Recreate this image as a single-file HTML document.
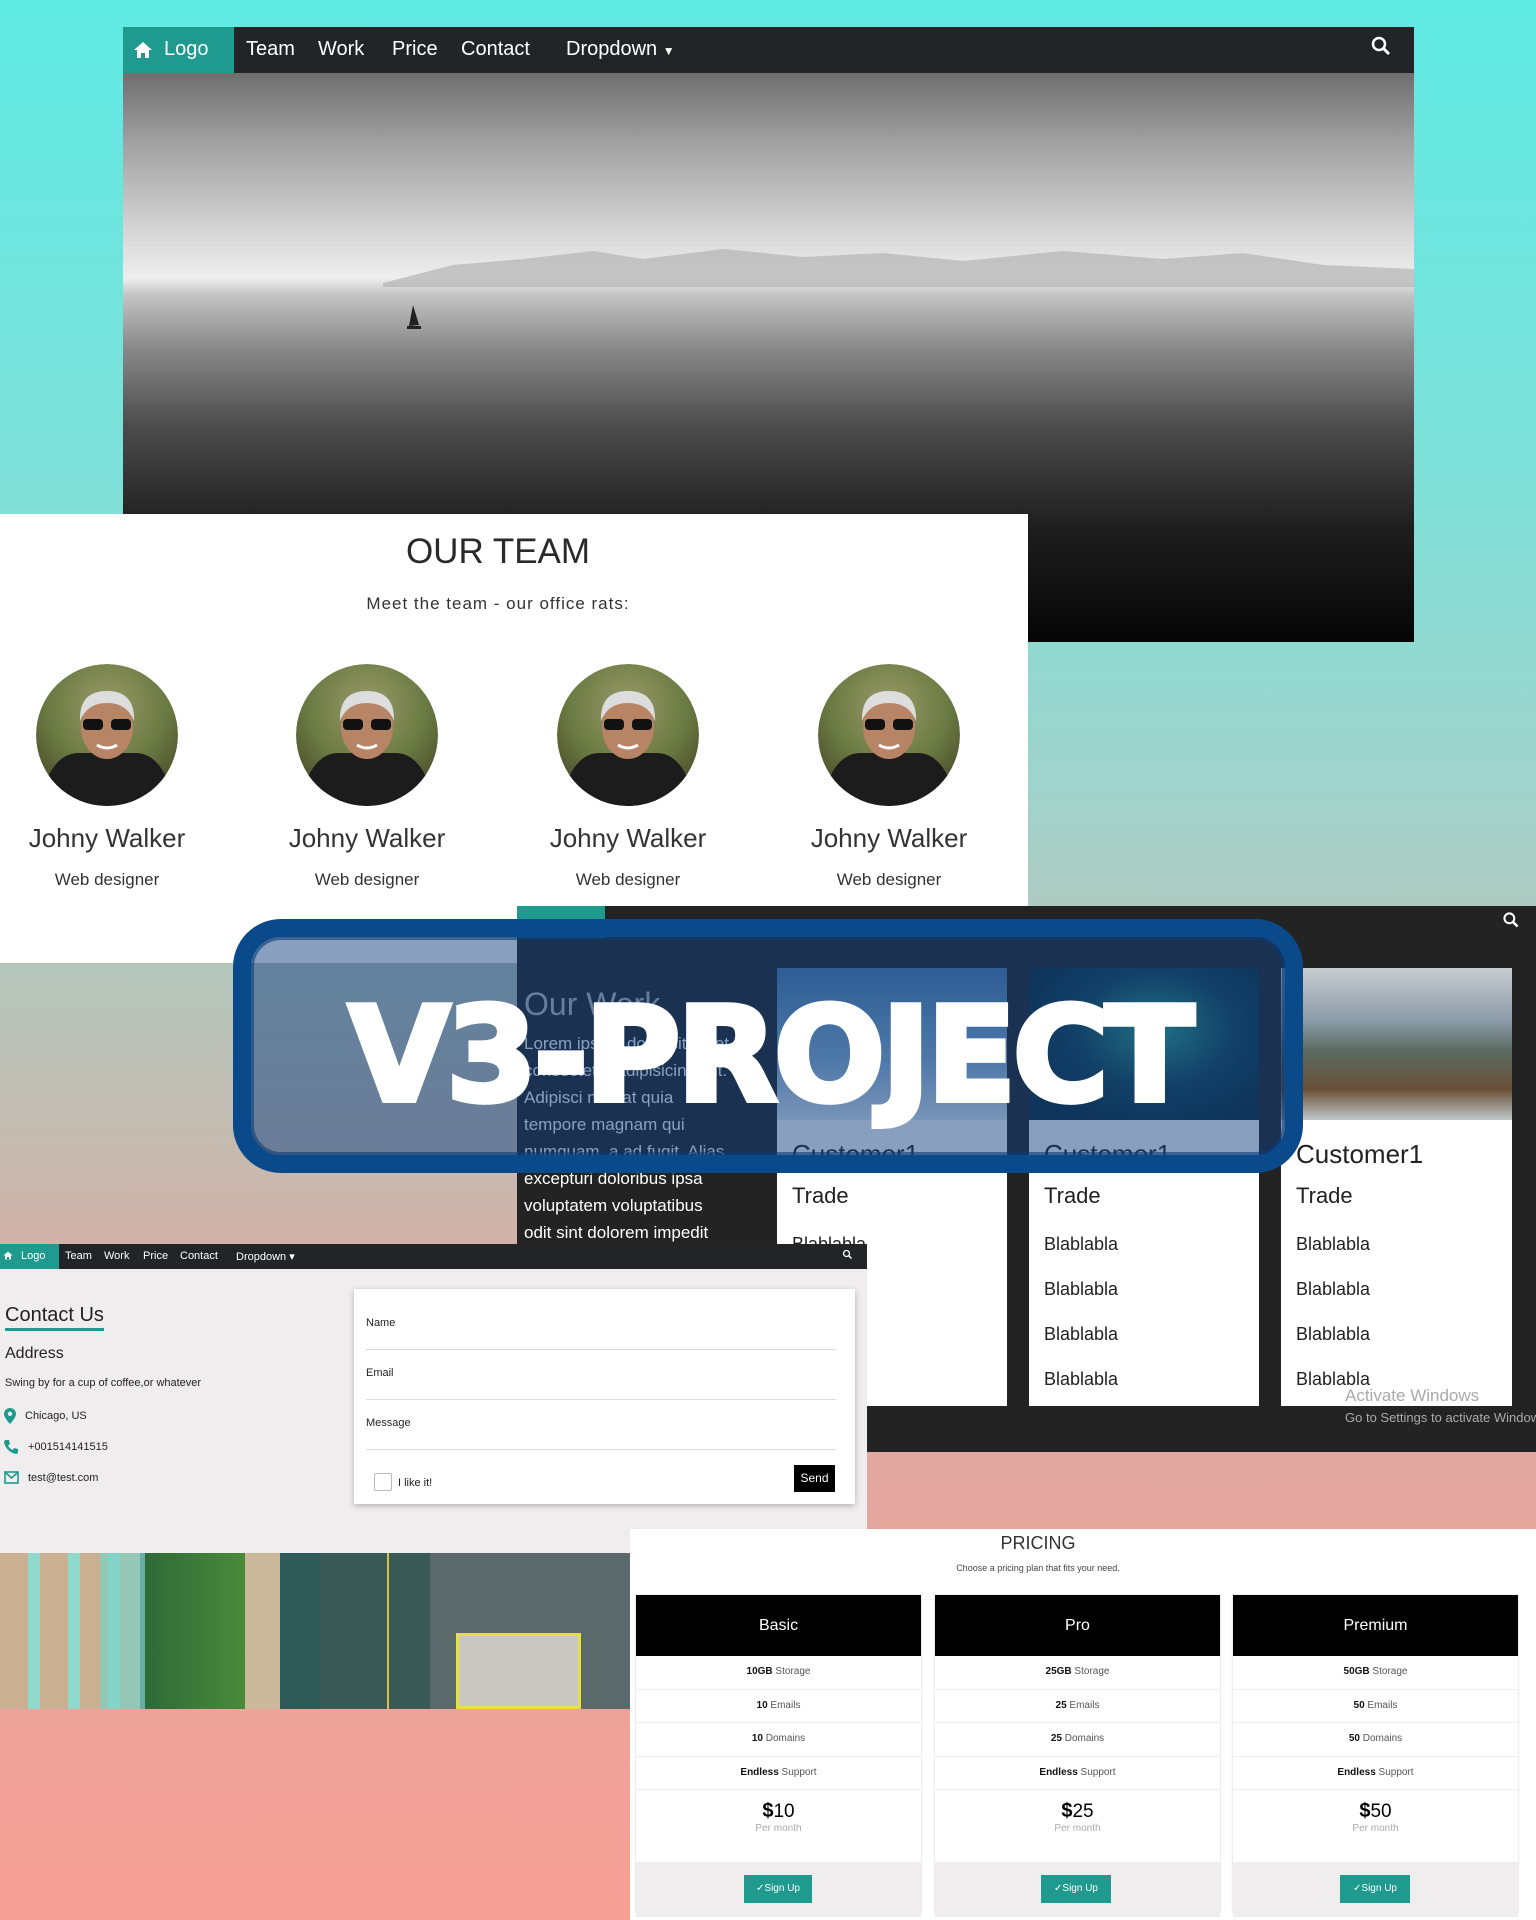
<!DOCTYPE html>
<html><head><meta charset="utf-8">
<style>
*{margin:0;padding:0;box-sizing:border-box}
body{width:1536px;height:1920px;position:relative;overflow:hidden;font-family:"Liberation Sans",sans-serif;
background:linear-gradient(180deg,#5eeae3 0%,#7ee0d8 25%,#a2d2ca 42%,#b4c6bc 50%,#c6baaf 60%,#d8aca5 68%,#e6a69e 80%,#f7a096 100%);}
.abs{position:absolute}
.nav{background:#222428;color:#fff}
.nav span{position:absolute;white-space:nowrap}
.teal{background:#1f9a8e}
.center{text-align:center}
</style></head><body>

<!-- HERO -->
<div class="abs" style="left:123px;top:27px;width:1291px;height:615px;overflow:hidden">
  <div class="abs nav" style="left:0;top:0;width:1291px;height:46px;font-size:20px">
    <div class="abs teal" style="left:0;top:0;width:111px;height:46px"></div>
    <svg class="abs" style="left:10px;top:14px" width="20" height="18" viewBox="0 0 20 18"><path d="M10 1L1 9h3v8h4v-5h4v5h4V9h3z" fill="#fff"/></svg>
    <span style="left:41px;top:11px">Logo</span>
    <span style="left:123px;top:11px">Team</span>
    <span style="left:195px;top:11px">Work</span>
    <span style="left:269px;top:11px">Price</span>
    <span style="left:338px;top:11px">Contact</span>
    <span style="left:443px;top:11px">Dropdown <span style="position:static;font-size:12px">▼</span></span>
    <svg class="abs" style="left:1247px;top:8px" width="22" height="22" viewBox="0 0 22 22"><circle cx="9" cy="9" r="6" stroke="#fff" stroke-width="2.5" fill="none"/><path d="M13.5 13.5L19 19" stroke="#fff" stroke-width="3"/></svg>
  </div>
  <div class="abs" style="left:0;top:46px;width:1291px;height:569px;background:linear-gradient(180deg,#6e6e6e 0%,#a0a0a0 12%,#d6d6d6 28%,#eeeeee 36%,#c4c4c4 39%,#8a8a8a 48%,#4c4c4c 62%,#1e1e1e 80%,#050505 100%)">
    <svg class="abs" style="left:0;top:0" width="1291" height="569"><path d="M260 210 L330 192 L400 186 L470 178 L520 186 L600 176 L680 184 L760 180 L840 188 L940 178 L1040 186 L1120 180 L1200 192 L1291 196 L1291 214 L260 214Z" fill="#b4b4b4" opacity=".7"/><path d="M286 253 L290 232 L296 252Z" fill="#222"/><rect x="284" y="253" width="14" height="3" fill="#222"/></svg>
  </div>
</div>

<!-- TEAM -->
<div class="abs" style="left:0;top:514px;width:1028px;height:449px;background:#fff;color:#333">
  <div class="abs center" style="left:0;width:996px;top:18px;font-size:35px;color:#2a2a2a">OUR TEAM</div>
  <div class="abs center" style="left:0;width:996px;top:80px;font-size:17px;letter-spacing:1px">Meet the team - our office rats:</div>
</div>
<svg class="abs" style="left:0;top:660px" width="1028" height="160">
  <defs>
    <radialGradient id="av" cx="50%" cy="30%" r="70%"><stop offset="0" stop-color="#9a9a6a"/><stop offset=".6" stop-color="#6a7a42"/><stop offset="1" stop-color="#4a4a2a"/></radialGradient>
    <clipPath id="cc"><circle cx="0" cy="0" r="71"/></clipPath>
    <g id="face" clip-path="url(#cc)">
      <circle r="71" fill="url(#av)"/>
      <path d="M-70 80 Q-60 20 -30 18 L30 18 Q60 20 70 80Z" fill="#1c1c1c"/>
      <ellipse cx="0" cy="-8" rx="26" ry="32" fill="#b88466"/>
      <path d="M-27 -14 Q-28 -44 0 -44 Q28 -44 27 -14 Q20 -32 0 -32 Q-20 -32 -27 -14Z" fill="#ddd"/>
      <rect x="-24" y="-16" width="20" height="11" rx="4" fill="#111"/><rect x="4" y="-16" width="20" height="11" rx="4" fill="#111"/>
      <path d="M-10 10 Q0 16 10 10" stroke="#fff" stroke-width="3" fill="none"/>
    </g>
  </defs>
  <use href="#face" x="107" y="75"/><use href="#face" x="367" y="75"/><use href="#face" x="628" y="75"/><use href="#face" x="889" y="75"/>
</svg>
<div class="abs center" style="left:7px;width:200px;top:823px;font-size:26px;color:#333">Johny Walker</div>
<div class="abs center" style="left:267px;width:200px;top:823px;font-size:26px;color:#333">Johny Walker</div>
<div class="abs center" style="left:528px;width:200px;top:823px;font-size:26px;color:#333">Johny Walker</div>
<div class="abs center" style="left:789px;width:200px;top:823px;font-size:26px;color:#333">Johny Walker</div>
<div class="abs center" style="left:7px;width:200px;top:870px;font-size:17px;color:#333">Web designer</div>
<div class="abs center" style="left:267px;width:200px;top:870px;font-size:17px;color:#333">Web designer</div>
<div class="abs center" style="left:528px;width:200px;top:870px;font-size:17px;color:#333">Web designer</div>
<div class="abs center" style="left:789px;width:200px;top:870px;font-size:17px;color:#333">Web designer</div>

<!-- WORK -->
<div class="abs" style="left:517px;top:906px;width:1019px;height:546px;background:#232323;overflow:hidden">
  <div class="abs teal" style="left:0;top:0;width:88px;height:32px"></div>
  <svg class="abs" style="left:985px;top:5px" width="18" height="18" viewBox="0 0 22 22"><circle cx="9" cy="9" r="6" stroke="#fff" stroke-width="2.5" fill="none"/><path d="M13.5 13.5L19 19" stroke="#fff" stroke-width="3"/></svg>
  <div class="abs" style="left:7px;top:80px;font-size:32px;color:#bbb">Our Work</div>
  <div class="abs" style="left:7px;top:124px;font-size:17px;line-height:27px;color:#fff">Lorem ipsum dolor sit amet,<br>consectetur adipisicing elit.<br>Adipisci nihil at quia<br>tempore magnam qui<br>numquam, a ad fugit. Alias<br>excepturi doloribus ipsa<br>voluptatem voluptatibus<br>odit sint dolorem impedit</div>
  <div class="abs" style="left:260px;top:62px;width:230px;height:438px;background:#fff">
    <div style="height:152px;background:linear-gradient(180deg,#4a7aa8,#8ab0d0 60%,#dfe8f0)"></div>
  </div>
  <div class="abs" style="left:512px;top:62px;width:230px;height:438px;background:#fff">
    <div style="height:152px;background:radial-gradient(ellipse at 55% 40%,#2fa08a,#12404e 45%,#0c2a38 80%),#123"></div>
  </div>
  <div class="abs" style="left:764px;top:62px;width:231px;height:438px;background:#fff">
    <div style="height:152px;background:linear-gradient(180deg,#c8ccd0 0%,#8a9aa8 35%,#5a6a60 55%,#6a5038 80%,#c0c8c8 100%)"></div>
  </div>
  <div class="abs" style="left:275px;top:228px;font-size:26px;color:#222;line-height:40px">Customer1<br><span style="font-size:22px">Trade</span></div>
  <div class="abs" style="left:527px;top:228px;font-size:26px;color:#222;line-height:40px">Customer1<br><span style="font-size:22px">Trade</span></div>
  <div class="abs" style="left:779px;top:228px;font-size:26px;color:#222;line-height:40px">Customer1<br><span style="font-size:22px">Trade</span></div>
  <div class="abs" style="left:275px;top:316px;font-size:18px;color:#222;line-height:45px">Blablabla<br>Blablabla<br>Blablabla<br>Blablabla</div>
  <div class="abs" style="left:527px;top:316px;font-size:18px;color:#222;line-height:45px">Blablabla<br>Blablabla<br>Blablabla<br>Blablabla</div>
  <div class="abs" style="left:779px;top:316px;font-size:18px;color:#222;line-height:45px">Blablabla<br>Blablabla<br>Blablabla<br>Blablabla</div>
  <div class="abs" style="left:828px;top:480px;font-size:17px;color:#aaa">Activate Windows</div>
  <div class="abs" style="left:828px;top:504px;font-size:13px;color:#aaa;white-space:nowrap">Go to Settings to activate Windows.</div>
</div>

<!-- CONTACT -->
<div class="abs" style="left:0;top:1244px;width:867px;height:309px;background:#efeded;color:#222">
  <div class="abs nav" style="left:0;top:0;width:867px;height:25px;font-size:11px">
    <div class="abs teal" style="left:0;top:0;width:59px;height:25px"></div>
    <svg class="abs" style="left:3px;top:7px" width="10" height="9" viewBox="0 0 20 18"><path d="M10 1L1 9h3v8h4v-5h4v5h4V9h3z" fill="#fff"/></svg>
    <span style="left:21px;top:6px">Logo</span><span style="left:65px;top:6px">Team</span><span style="left:104px;top:6px">Work</span><span style="left:143px;top:6px">Price</span><span style="left:180px;top:6px">Contact</span><span style="left:236px;top:6px">Dropdown ▾</span>
    <svg class="abs" style="left:842px;top:5px" width="11" height="11" viewBox="0 0 22 22"><circle cx="9" cy="9" r="6" stroke="#fff" stroke-width="2.5" fill="none"/><path d="M13.5 13.5L19 19" stroke="#fff" stroke-width="3"/></svg>
  </div>
  <div class="abs" style="left:5px;top:60px;font-size:20px;border-bottom:3px solid #1f9a8e;padding-bottom:1px">Contact Us</div>
  <div class="abs" style="left:5px;top:101px;font-size:16px">Address</div>
  <div class="abs" style="left:5px;top:133px;font-size:11px">Swing by for a cup of coffee,or whatever</div>
  <svg class="abs" style="left:4px;top:164px" width="12" height="16" viewBox="0 0 12 16"><path d="M6 0C2.7 0 0 2.6 0 5.8 0 10 6 16 6 16s6-6 6-10.2C12 2.6 9.3 0 6 0z" fill="#1f9a8e"/><circle cx="6" cy="5.8" r="2.2" fill="#efeded"/></svg>
  <div class="abs" style="left:25px;top:166px;font-size:11px">Chicago, US</div>
  <svg class="abs" style="left:4px;top:195px" width="15" height="15" viewBox="0 0 15 15"><path d="M2 1l3 0 1 4-2 1.5c1 2 2.5 3.5 4.5 4.5L10 9l4 1v3c0 1-1 2-2 2C6 14 1 9 0 3c0-1 1-2 2-2z" fill="#1f9a8e"/></svg>
  <div class="abs" style="left:28px;top:197px;font-size:11px">+001514141515</div>
  <svg class="abs" style="left:4px;top:227px" width="15" height="13" viewBox="0 0 15 13"><rect x="1" y="1" width="13" height="11" stroke="#1f9a8e" stroke-width="1.6" fill="none"/><path d="M1 1l6.5 6 6.5-6" stroke="#1f9a8e" stroke-width="1.6" fill="none"/></svg>
  <div class="abs" style="left:28px;top:228px;font-size:11px">test@test.com</div>
  <div class="abs" style="left:354px;top:45px;width:501px;height:215px;background:#fff;box-shadow:0 2px 6px rgba(0,0,0,.25)">
    <div class="abs" style="left:12px;top:28px;font-size:11px">Name</div>
    <div class="abs" style="left:12px;top:60px;width:470px;height:1px;background:#ddd"></div>
    <div class="abs" style="left:12px;top:78px;font-size:11px">Email</div>
    <div class="abs" style="left:12px;top:110px;width:470px;height:1px;background:#ddd"></div>
    <div class="abs" style="left:12px;top:128px;font-size:11px">Message</div>
    <div class="abs" style="left:12px;top:160px;width:470px;height:1px;background:#ddd"></div>
    <div class="abs" style="left:20px;top:184px;width:18px;height:18px;border:1px solid #bbb;border-radius:2px"></div>
    <div class="abs" style="left:44px;top:188px;font-size:11px">I like it!</div>
    <div class="abs" style="left:440px;top:176px;width:41px;height:27px;background:#000;color:#fff;font-size:12px;text-align:center;line-height:27px">Send</div>
  </div>
</div>

<!-- CITY -->
<div class="abs" style="left:0;top:1553px;width:630px;height:156px;overflow:hidden;background:#2f5a52">
  <div class="abs" style="left:0;top:0;width:140px;height:156px;background:#c9b090"></div>
  <div class="abs" style="left:0;top:0;width:160px;height:156px;background:repeating-linear-gradient(90deg,transparent 0 28px,#8fd8cc 28px 40px)"></div>
  <div class="abs" style="left:100px;top:0;width:50px;height:156px;background:#7fd2c8;opacity:.7"></div>
  <div class="abs" style="left:145px;top:0;width:100px;height:156px;background:linear-gradient(90deg,#2f6a38,#4a8a3a)"></div>
  <div class="abs" style="left:245px;top:0;width:35px;height:156px;background:#cbb89a"></div>
  <div class="abs" style="left:280px;top:0;width:40px;height:156px;background:#2e5a58"></div>
  <div class="abs" style="left:320px;top:0;width:110px;height:156px;background:#3a5a58"></div>
  <div class="abs" style="left:387px;top:0;width:2px;height:156px;background:#d8c040"></div>
  <div class="abs" style="left:430px;top:0;width:200px;height:156px;background:#5a6a6a"></div>
  <div class="abs" style="left:456px;top:80px;width:125px;height:76px;border:3px solid #e8e040;background:#c8c8c0"></div>
</div>

<!-- PRICING -->
<div class="abs" style="left:630px;top:1529px;width:906px;height:391px;background:#fff;color:#222">
  <div class="abs center" style="left:0;width:816px;top:4px;font-size:18px;color:#333">PRICING</div>
  <div class="abs center" style="left:0;width:816px;top:34px;font-size:9px;color:#444">Choose a pricing plan that fits your need.</div>
</div>

<div class="abs" style="left:636px;top:1595px;width:285px;height:318px;background:#fff;box-shadow:0 0 2px #ccc">
  <div style="height:61px;background:#000;color:#fff;text-align:center;line-height:61px;font-size:16px">Basic</div>
  <div style="font-size:10px;text-align:center;line-height:32.5px;color:#555"><div style="border-bottom:1px solid #eee"><b style="color:#111">10GB</b> Storage</div><div style="border-bottom:1px solid #eee"><b style="color:#111">10</b> Emails</div><div style="border-bottom:1px solid #eee"><b style="color:#111">10</b> Domains</div><div style="border-bottom:1px solid #eee"><b style="color:#111">Endless</b> Support</div></div>
  <div style="text-align:center;padding-top:10px;height:72px"><span style="font-size:20px;font-weight:bold">$</span><span style="font-size:19px">10</span><div style="font-size:10px;color:#aaa">Per month</div></div>
  <div style="height:55px;background:#efeded;position:relative"><div class="abs teal" style="left:108px;top:13px;width:68px;height:28px;color:#fff;font-size:10px;text-align:center;line-height:28px">✓Sign Up</div></div>
</div>
<div class="abs" style="left:935px;top:1595px;width:285px;height:318px;background:#fff;box-shadow:0 0 2px #ccc">
  <div style="height:61px;background:#000;color:#fff;text-align:center;line-height:61px;font-size:16px">Pro</div>
  <div style="font-size:10px;text-align:center;line-height:32.5px;color:#555"><div style="border-bottom:1px solid #eee"><b style="color:#111">25GB</b> Storage</div><div style="border-bottom:1px solid #eee"><b style="color:#111">25</b> Emails</div><div style="border-bottom:1px solid #eee"><b style="color:#111">25</b> Domains</div><div style="border-bottom:1px solid #eee"><b style="color:#111">Endless</b> Support</div></div>
  <div style="text-align:center;padding-top:10px;height:72px"><span style="font-size:20px;font-weight:bold">$</span><span style="font-size:19px">25</span><div style="font-size:10px;color:#aaa">Per month</div></div>
  <div style="height:55px;background:#efeded;position:relative"><div class="abs teal" style="left:106px;top:13px;width:70px;height:28px;color:#fff;font-size:10px;text-align:center;line-height:28px">✓Sign Up</div></div>
</div>
<div class="abs" style="left:1233px;top:1595px;width:285px;height:318px;background:#fff;box-shadow:0 0 2px #ccc">
  <div style="height:61px;background:#000;color:#fff;text-align:center;line-height:61px;font-size:16px">Premium</div>
  <div style="font-size:10px;text-align:center;line-height:32.5px;color:#555"><div style="border-bottom:1px solid #eee"><b style="color:#111">50GB</b> Storage</div><div style="border-bottom:1px solid #eee"><b style="color:#111">50</b> Emails</div><div style="border-bottom:1px solid #eee"><b style="color:#111">50</b> Domains</div><div style="border-bottom:1px solid #eee"><b style="color:#111">Endless</b> Support</div></div>
  <div style="text-align:center;padding-top:10px;height:72px"><span style="font-size:20px;font-weight:bold">$</span><span style="font-size:19px">50</span><div style="font-size:10px;color:#aaa">Per month</div></div>
  <div style="height:55px;background:#efeded;position:relative"><div class="abs teal" style="left:107px;top:13px;width:70px;height:28px;color:#fff;font-size:10px;text-align:center;line-height:28px">✓Sign Up</div></div>
</div>

<!-- BANNER -->
<div class="abs" style="left:233px;top:919px;width:1070px;height:254px;border:18px solid #0b4a8a;border-radius:48px;background:rgba(18,63,128,.5)"></div>
<div class="abs" style="left:251px;top:937px;width:1034px;height:218px;border:3px solid rgba(10,60,120,.6);border-radius:30px"></div>
<div class="abs" style="left:250px;top:990px;width:1040px;text-align:center;font-size:130px;font-weight:bold;color:#fff;letter-spacing:-3px;line-height:1;font-family:'DejaVu Sans','Liberation Sans',sans-serif;-webkit-text-stroke:6px #fff">V3-PROJECT</div>

</body></html>
